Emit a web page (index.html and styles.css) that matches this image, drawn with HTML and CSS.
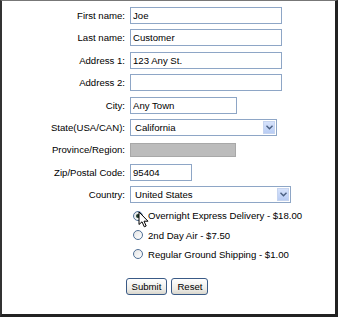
FILE: index.html
```html
<!DOCTYPE html>
<html lang="en">
<head>
  <meta charset="UTF-8">
  <title>Shipping form</title>
  <link rel="stylesheet" href="styles.css">
</head>
<body>
  <div class="frame">
    <form class="form">
      <div class="fields">
        <label>First name:</label>
        <input class="txt w-full" type="text" value="Joe">

        <label>Last name:</label>
        <input class="txt w-full" type="text" value="Customer">

        <label>Address 1:</label>
        <input class="txt w-full" type="text" value="123 Any St.">

        <label>Address 2:</label>
        <input class="txt w-full" type="text" value="">

        <label>City:</label>
        <input class="txt w-city" type="text" value="Any Town">

        <label>State(USA/CAN):</label>
        <div class="select w-state">
          <span class="sel-text">California</span>
          <span class="drop">
            <svg width="7" height="5" viewBox="0 0 7 5"><path d="M0.5 0.8 L3.5 3.8 L6.5 0.8" fill="none" stroke="#4a5f80" stroke-width="1.4"/></svg>
          </span>
        </div>

        <label>Province/Region:</label>
        <input class="txt w-prov disabled" type="text" value="" disabled>

        <label>Zip/Postal Code:</label>
        <input class="txt w-zip" type="text" value="95404">

        <label>Country:</label>
        <div class="select w-country">
          <span class="sel-text">United States</span>
          <span class="drop">
            <svg width="7" height="5" viewBox="0 0 7 5"><path d="M0.5 0.8 L3.5 3.8 L6.5 0.8" fill="none" stroke="#4a5f80" stroke-width="1.4"/></svg>
          </span>
        </div>
      </div>

      <div class="shipping">
        <label class="opt"><span class="radio checked"></span>Overnight Express Delivery - $18.00</label>
        <label class="opt"><span class="radio"></span>2nd Day Air - $7.50</label>
        <label class="opt"><span class="radio"></span>Regular Ground Shipping - $1.00</label>

        <!-- mouse pointer over the first option -->
        <svg class="cursor" width="11" height="17" viewBox="0 0 11 17">
          <path d="M1 1 L1 13.5 L4 10.8 L6.3 15.8 L8.2 15 L6 10.2 L10 10.2 Z" fill="#fff" stroke="#000" stroke-width="1" stroke-linejoin="round"/>
        </svg>
      </div>

      <div class="buttons">
        <button type="button" class="btn">Submit</button>
        <button type="button" class="btn">Reset</button>
      </div>
    </form>
  </div>
</body>
</html>
```

FILE: styles.css
```css
body, html {
  margin: 0;
  padding: 0;
  background: #fff;
}

.frame {
  width: 338px;
  height: 317px;
  box-sizing: border-box;
  border-top: 1px solid #777;
  border-left: 2px solid #333;
  border-right: 3px solid #222;
  border-bottom: 3px solid #222;
  background: #fff;
  font-family: "Liberation Sans", Arial, sans-serif;
  font-size: 9.6px;
  color: #000;
  overflow: hidden;
}

.form {
  padding-top: 6px;
}

.fields {
  display: grid;
  grid-template-columns: 123px 1fr;
  column-gap: 5px;
  row-gap: 5.4px;
  grid-auto-rows: 17px;
  align-items: center;
}

.fields label {
  text-align: right;
}

.txt {
  box-sizing: border-box;
  height: 17px;
  margin: 0;
  padding: 0 2px;
  border: 1px solid #8ea6c6;
  background: #fff;
  font-family: inherit;
  font-size: 9.6px;
  color: #000;
  outline: none;
}

.w-full { width: 152px; }
.w-city { width: 107px; }
.w-prov { width: 106px; height: 14px; }
.w-zip { width: 62px; }
.w-state { width: 147px; }
.w-country { width: 161px; }

.disabled {
  background: #bcbcbc;
  border-color: #a8a8a8;
}

.select {
  box-sizing: border-box;
  height: 17px;
  border: 1px solid #8ea6c6;
  background: #fff;
  display: flex;
  align-items: center;
  justify-content: space-between;
  padding: 1px;
}

.sel-text {
  padding-left: 3px;
}

.drop {
  width: 12px;
  height: 13px;
  box-sizing: border-box;
  background: linear-gradient(#d6e2fb, #b9cdf4);
  border: 1px solid #c6d4ef;
  display: flex;
  align-items: center;
  justify-content: center;
}

.shipping {
  position: relative;
  padding: 3px 0 0 131px;
  display: flex;
  flex-direction: column;
}

.opt {
  height: 19.3px;
  display: flex;
  align-items: center;
  gap: 5px;
}

.radio {
  width: 10px;
  height: 10px;
  box-sizing: border-box;
  border: 1px solid #4f6f96;
  border-radius: 50%;
  background: linear-gradient(135deg, #e4e4e4, #fff);
  position: relative;
}

.radio.checked::after {
  content: "";
  position: absolute;
  left: 2px;
  top: 2px;
  width: 4px;
  height: 4px;
  border-radius: 50%;
  background: #1f3b2a;
}

.cursor {
  position: absolute;
  left: 136px;
  top: 8px;
}

.buttons {
  display: flex;
  justify-content: center;
  gap: 4px;
  margin-top: 14px;
  padding-right: 3px;
}

.btn {
  height: 17px;
  margin: 0;
  padding: 0 5px;
  border: 1px solid #3a5a86;
  border-radius: 3px;
  background: linear-gradient(#ffffff, #ecebe6 70%, #d9d6cc);
  font-family: inherit;
  font-size: 9.6px;
  color: #000;
}
```
